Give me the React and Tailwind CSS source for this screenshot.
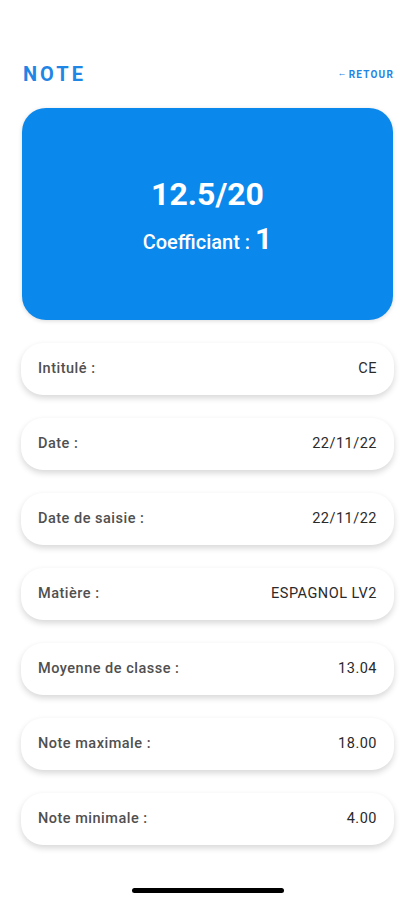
import React from 'react';

const rows = [
    { label: 'Intitulé :', value: 'CE' },
    { label: 'Date :', value: '22/11/22' },
    { label: 'Date de saisie :', value: '22/11/22' },
    { label: 'Matière :', value: 'ESPAGNOL LV2' },
    { label: 'Moyenne de classe :', value: '13.04' },
    { label: 'Note maximale :', value: '18.00' },
    { label: 'Note minimale :', value: '4.00' },
];

const App = () => {
    return (
        <div className="w-[415px] h-[900px] bg-white flex flex-col font-['Roboto',sans-serif] overflow-hidden">
            {/* Header */}
            <div className="flex justify-between items-center pl-[23px] pr-[21px] pt-[62px] h-[86px]">
                <h1 className="text-[20px] font-bold tracking-[3px] text-[#1f86e6]">NOTE</h1>
                <button className="flex items-center text-[10px] font-bold tracking-[1.2px] text-[#1f86e6]">
                    <span className="mr-[1px] text-[9px]">&larr;</span>RETOUR
                </button>
            </div>

            {/* Grade card */}
            <div className="mx-[22px] mt-[22px] h-[212px] rounded-[24px] bg-[#0a88ec] flex flex-col items-center justify-center text-white shadow-[0_1px_4px_rgba(0,0,0,0.15)]">
                <p className="text-[32px] font-bold leading-none mt-[4px]">12.5/20</p>
                <p className="mt-[14px] flex items-baseline leading-none">
                    <span className="text-[20px] font-medium">Coefficiant :&nbsp;</span>
                    <span className="text-[30px] font-bold">1</span>
                </p>
            </div>

            {/* Details */}
            <div className="flex flex-col gap-[23px] mt-[23px] mx-[21px]">
                {rows.map((row) => (
                    <div
                        key={row.label}
                        className="h-[52px] rounded-[22px] bg-white flex items-center justify-between px-[17px] shadow-[0_3px_6px_rgba(0,0,0,0.16)]"
                    >
                        <span className="text-[14.5px] font-medium tracking-[0.5px] text-[#505050]">{row.label}</span>
                        <span className="text-[14.5px] tracking-[0.5px] text-[#2a2a2a]">{row.value}</span>
                    </div>
                ))}
            </div>

            {/* Home indicator */}
            <div className="flex justify-center mt-auto mb-[7px]">
                <div className="w-[152px] h-[5px] rounded-full bg-black" />
            </div>
        </div>
    );
};

export default App;
